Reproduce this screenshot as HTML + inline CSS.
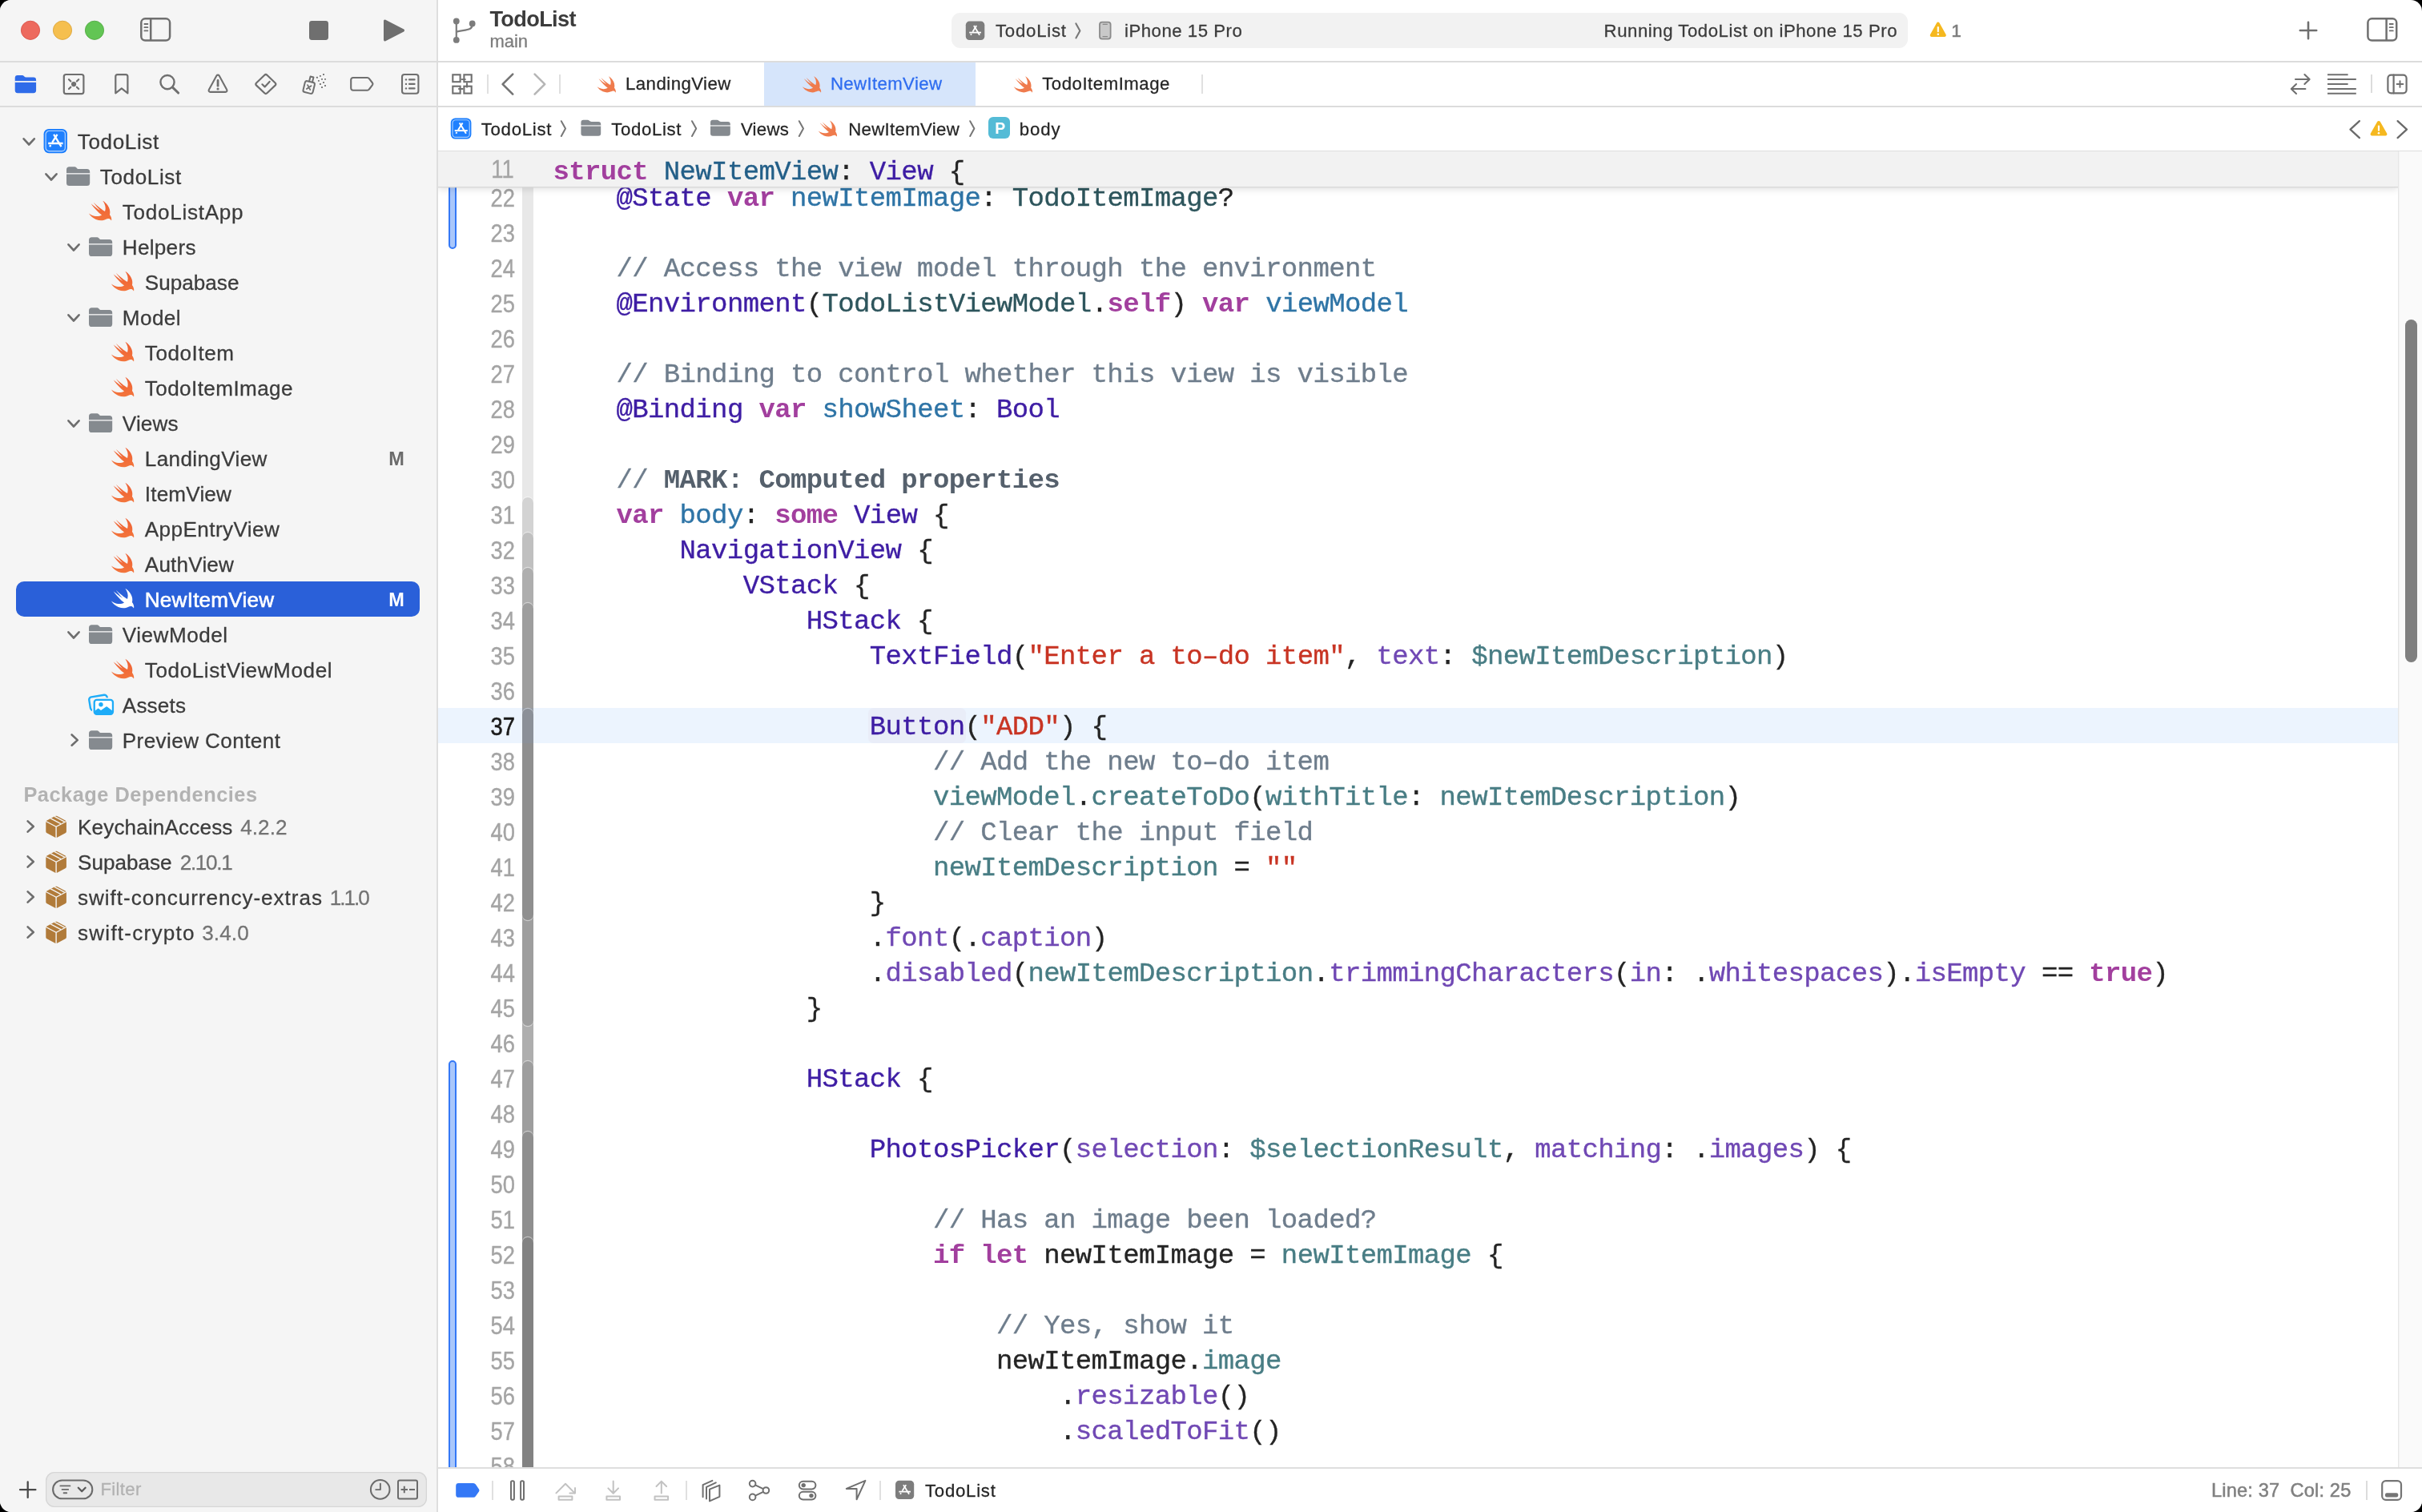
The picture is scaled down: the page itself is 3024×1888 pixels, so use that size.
<!DOCTYPE html>
<html><head><meta charset="utf-8"><title>Xcode</title>
<style>
html,body{margin:0;padding:0;background:#000;}
body{width:3024px;height:1888px;overflow:hidden;position:relative;}
#win{will-change:transform;position:absolute;left:0;top:0;width:3024px;height:1888px;background:#fff;border-radius:14px;overflow:hidden;}
.b{position:absolute;display:block;}
.t{position:absolute;white-space:pre;}
.fs{font-family:"Liberation Sans", sans-serif;-webkit-text-stroke:0.28px;}
.fm{font-family:"Liberation Mono", monospace;}
.cl{position:absolute;left:0;white-space:pre;font-family:"Liberation Mono", monospace;font-size:34px;line-height:44px;height:44px;letter-spacing:-0.633px;color:#242424;-webkit-text-stroke:0.35px;}
.k{color:#a23f9e;font-weight:bold;-webkit-text-stroke:0;}
.dt{color:#235f88;}
.dv{color:#2e74a6;}
.pc{color:#2d555c;}
.pf{color:#487d84;}
.oc{color:#3e1da4;}
.of{color:#7048b4;}
.s{color:#c83423;}
.c{color:#6e7d8c;}
.mk{color:#55606c;font-weight:bold;-webkit-text-stroke:0;}
</style></head><body><div id="win">
<div class="b" style="left:0.00px;top:0.00px;width:545.00px;height:1888.00px;background:#f5f5f5;"></div>
<div class="b" style="left:545.00px;top:0.00px;width:1.50px;height:1888.00px;background:#dedede;"></div>
<div class="b" style="left:0.00px;top:76.00px;width:3024.00px;height:1.60px;background:#dcdcdc;"></div>
<div class="b" style="left:0.00px;top:132.20px;width:3024.00px;height:1.60px;background:#dcdcdc;"></div>
<div class="b" style="left:546.50px;top:188.00px;width:2477.50px;height:1.40px;background:#dedede;"></div>
<div class="t fs" style="left:611.40px;top:9.58px;font-size:27.2px;line-height:27.2px;color:#3c3c3c;font-weight:bold;-webkit-text-stroke:0;letter-spacing:-0.659px;">TodoList</div>
<div class="t fs" style="left:611.60px;top:41.38px;font-size:22px;line-height:22px;color:#7c7c7c;letter-spacing:-0.095px;">main</div>
<div class="b" style="left:1187.70px;top:16.00px;width:1194.30px;height:43.60px;background:#f2f2f2;border-radius:11px;"></div>
<div class="t fs" style="left:1243.00px;top:27.61px;font-size:22.2px;line-height:22.2px;color:#3c3c3c;letter-spacing:0.758px;">TodoList</div>
<div class="t fs" style="left:1404.00px;top:27.61px;font-size:22.2px;line-height:22.2px;color:#3c3c3c;letter-spacing:0.517px;">iPhone 15 Pro</div>
<div class="t fs" style="left:2002.60px;top:27.61px;font-size:22.2px;line-height:22.2px;color:#3c3c3c;letter-spacing:0.538px;">Running TodoList on iPhone 15 Pro</div>
<div class="t fs" style="left:2436.60px;top:27.98px;font-size:22px;line-height:22px;color:#7e7e7e;-webkit-text-stroke:0.7px;">1</div>
<div class="b" style="left:608.10px;top:93.20px;width:1.50px;height:23.40px;background:#e0e0e0;"></div>
<div class="b" style="left:698.30px;top:93.20px;width:1.50px;height:23.40px;background:#e0e0e0;"></div>
<div class="t fs" style="left:781.00px;top:94.41px;font-size:22.2px;line-height:22.2px;color:#262626;letter-spacing:0.468px;">LandingView</div>
<div class="b" style="left:953.90px;top:77.60px;width:263.80px;height:54.60px;background:#d6e5fb;"></div>
<div class="t fs" style="left:1036.90px;top:94.41px;font-size:22.2px;line-height:22.2px;color:#2f6df0;letter-spacing:0.384px;">NewItemView</div>
<div class="t fs" style="left:1301.20px;top:94.41px;font-size:22.2px;line-height:22.2px;color:#262626;letter-spacing:0.524px;">TodoItemImage</div>
<div class="b" style="left:1500.30px;top:93.20px;width:1.50px;height:23.40px;background:#e0e0e0;"></div>
<div class="b" style="left:2960.40px;top:93.40px;width:1.40px;height:23.00px;background:#dcdcdc;"></div>
<div class="t fs" style="left:600.70px;top:150.61px;font-size:22.2px;line-height:22.2px;color:#262626;letter-spacing:0.729px;">TodoList</div>
<div class="t fs" style="left:763.20px;top:150.61px;font-size:22.2px;line-height:22.2px;color:#262626;letter-spacing:0.672px;">TodoList</div>
<div class="t fs" style="left:924.90px;top:150.61px;font-size:22.2px;line-height:22.2px;color:#262626;letter-spacing:0.293px;">Views</div>
<div class="t fs" style="left:1059.20px;top:150.61px;font-size:22.2px;line-height:22.2px;color:#262626;letter-spacing:0.334px;">NewItemView</div>
<div class="b" style="left:1234.30px;top:146.20px;width:27.20px;height:27.20px;background:#54bbd6;border-radius:6px;"></div>
<div class="t fs" style="left:1242.20px;top:151.49px;font-size:19.5px;line-height:19.5px;color:#fff;font-weight:bold;-webkit-text-stroke:0;">P</div>
<div class="t fs" style="left:1272.70px;top:150.61px;font-size:22.2px;line-height:22.2px;color:#262626;letter-spacing:0.894px;">body</div>
<div class="t fs" style="left:96.80px;top:164.41px;font-size:26.1px;line-height:26.1px;color:#3c3c3c;letter-spacing:0.601px;">TodoList</div>
<div class="t fs" style="left:124.80px;top:208.41px;font-size:26.1px;line-height:26.1px;color:#3c3c3c;letter-spacing:0.601px;">TodoList</div>
<div class="t fs" style="left:152.80px;top:252.41px;font-size:26.1px;line-height:26.1px;color:#3c3c3c;letter-spacing:0.715px;">TodoListApp</div>
<div class="t fs" style="left:152.80px;top:296.41px;font-size:26.1px;line-height:26.1px;color:#3c3c3c;letter-spacing:0.286px;">Helpers</div>
<div class="t fs" style="left:180.80px;top:340.41px;font-size:26.1px;line-height:26.1px;color:#3c3c3c;letter-spacing:0.01px;">Supabase</div>
<div class="t fs" style="left:152.80px;top:384.41px;font-size:26.1px;line-height:26.1px;color:#3c3c3c;letter-spacing:0.43px;">Model</div>
<div class="t fs" style="left:180.80px;top:428.41px;font-size:26.1px;line-height:26.1px;color:#3c3c3c;letter-spacing:0.557px;">TodoItem</div>
<div class="t fs" style="left:180.80px;top:472.41px;font-size:26.1px;line-height:26.1px;color:#3c3c3c;letter-spacing:0.406px;">TodoItemImage</div>
<div class="t fs" style="left:152.80px;top:516.41px;font-size:26.1px;line-height:26.1px;color:#3c3c3c;letter-spacing:0.148px;">Views</div>
<div class="t fs" style="left:180.80px;top:560.41px;font-size:26.1px;line-height:26.1px;color:#3c3c3c;letter-spacing:0.362px;">LandingView</div>
<div class="t fs" style="left:485.20px;top:562.21px;font-size:23.5px;line-height:23.5px;color:#6b6b6b;font-weight:bold;-webkit-text-stroke:0;">M</div>
<div class="t fs" style="left:180.80px;top:604.41px;font-size:26.1px;line-height:26.1px;color:#3c3c3c;letter-spacing:0.182px;">ItemView</div>
<div class="t fs" style="left:180.80px;top:648.41px;font-size:26.1px;line-height:26.1px;color:#3c3c3c;letter-spacing:0.423px;">AppEntryView</div>
<div class="t fs" style="left:180.80px;top:692.41px;font-size:26.1px;line-height:26.1px;color:#3c3c3c;letter-spacing:0.194px;">AuthView</div>
<div class="b" style="left:20.00px;top:725.90px;width:504.00px;height:44.00px;background:#2a60d9;border-radius:10px;"></div>
<div class="t fs" style="left:180.80px;top:736.41px;font-size:26.1px;line-height:26.1px;color:#fff;letter-spacing:0.224px;-webkit-text-stroke:0.6px;">NewItemView</div>
<div class="t fs" style="left:485.20px;top:738.21px;font-size:23.5px;line-height:23.5px;color:#fff;font-weight:bold;-webkit-text-stroke:0;">M</div>
<div class="t fs" style="left:152.80px;top:780.41px;font-size:26.1px;line-height:26.1px;color:#3c3c3c;letter-spacing:0.506px;">ViewModel</div>
<div class="t fs" style="left:180.80px;top:824.41px;font-size:26.1px;line-height:26.1px;color:#3c3c3c;letter-spacing:0.587px;">TodoListViewModel</div>
<div class="t fs" style="left:152.80px;top:868.41px;font-size:26.1px;line-height:26.1px;color:#3c3c3c;letter-spacing:0.177px;">Assets</div>
<div class="t fs" style="left:152.80px;top:912.41px;font-size:26.1px;line-height:26.1px;color:#3c3c3c;letter-spacing:0.407px;">Preview Content</div>
<div class="t fs" style="left:29.40px;top:979.60px;font-size:25.4px;line-height:25.4px;color:#b2b2b2;font-weight:bold;-webkit-text-stroke:0;letter-spacing:0.496px;">Package Dependencies</div>
<div class="t fs" style="left:97.00px;top:1020.31px;font-size:26.1px;line-height:26.1px;color:#3c3c3c;letter-spacing:0.148px;">KeychainAccess</div>
<div class="t fs" style="left:300.13px;top:1020.31px;font-size:26.1px;line-height:26.1px;color:#737373;letter-spacing:0.093px;">4.2.2</div>
<div class="t fs" style="left:97.00px;top:1064.31px;font-size:26.1px;line-height:26.1px;color:#3c3c3c;letter-spacing:0.01px;">Supabase</div>
<div class="t fs" style="left:224.71px;top:1064.31px;font-size:26.1px;line-height:26.1px;color:#737373;letter-spacing:-1.314px;">2.10.1</div>
<div class="t fs" style="left:97.00px;top:1108.31px;font-size:26.1px;line-height:26.1px;color:#3c3c3c;letter-spacing:0.968px;">swift-concurrency-extras</div>
<div class="t fs" style="left:411.74px;top:1108.31px;font-size:26.1px;line-height:26.1px;color:#737373;letter-spacing:-1.98px;">1.1.0</div>
<div class="t fs" style="left:97.00px;top:1152.31px;font-size:26.1px;line-height:26.1px;color:#3c3c3c;letter-spacing:1.232px;">swift-crypto</div>
<div class="t fs" style="left:252.24px;top:1152.31px;font-size:26.1px;line-height:26.1px;color:#737373;letter-spacing:0.093px;">3.4.0</div>
<div class="b" style="left:56.50px;top:1838.20px;width:476.80px;height:43.40px;background:#e8e8e8;border-radius:11px;box-shadow:inset 0 0 0 1.3px #d6d6d6;"></div>
<div class="t fs" style="left:125.40px;top:1848.51px;font-size:22.2px;line-height:22.2px;color:#b2b2b2;letter-spacing:0.332px;">Filter</div>
<div class="b" style="left:0;top:189.4px;width:3024px;height:1643.0px;overflow:hidden;">
<div class="b" style="left:546.50px;top:694.80px;width:2447.90px;height:43.70px;background:#ecf4fe;"></div>
<div class="b" style="left:1083.80px;top:694.80px;width:122.20px;height:43.70px;background:#e9edf8;border-radius:6.5px;"></div>
<div class="b" style="left:652.00px;top:-8.00px;width:14.00px;height:1661.00px;background:#e8e8e8;"></div>
<div class="b" style="left:652.00px;top:432.00px;width:14.00px;height:1221.00px;background:#d3d3d3;border-top-left-radius:7px;border-top-right-radius:7px;box-shadow:0 -1.3px 0 rgba(255,255,255,0.45);"></div>
<div class="b" style="left:652.00px;top:476.00px;width:14.00px;height:1177.00px;background:#c0c0c0;border-top-left-radius:7px;border-top-right-radius:7px;box-shadow:0 -1.3px 0 rgba(255,255,255,0.45);"></div>
<div class="b" style="left:652.00px;top:520.00px;width:14.00px;height:1133.00px;background:#aeaeae;border-top-left-radius:7px;border-top-right-radius:7px;box-shadow:0 -1.3px 0 rgba(255,255,255,0.45);"></div>
<div class="b" style="left:652.00px;top:564.00px;width:14.00px;height:528.00px;background:#9e9e9e;border-top-left-radius:7px;border-top-right-radius:7px;border-bottom-left-radius:7px;border-bottom-right-radius:7px;box-shadow:0 -1.3px 0 rgba(255,255,255,0.45),0 1.3px 0 rgba(255,255,255,0.45);"></div>
<div class="b" style="left:652.00px;top:696.00px;width:14.00px;height:264.00px;background:#8f8f8f;border-top-left-radius:7px;border-top-right-radius:7px;border-bottom-left-radius:7px;border-bottom-right-radius:7px;box-shadow:0 -1.3px 0 rgba(255,255,255,0.45),0 1.3px 0 rgba(255,255,255,0.45);"></div>
<div class="b" style="left:652.00px;top:1136.00px;width:14.00px;height:517.00px;background:#9e9e9e;border-top-left-radius:7px;border-top-right-radius:7px;box-shadow:0 -1.3px 0 rgba(255,255,255,0.45);"></div>
<div class="b" style="left:652.00px;top:1224.00px;width:14.00px;height:429.00px;background:#8f8f8f;border-top-left-radius:7px;border-top-right-radius:7px;box-shadow:0 -1.3px 0 rgba(255,255,255,0.45);"></div>
<div class="b" style="left:652.00px;top:1356.00px;width:14.00px;height:297.00px;background:#828282;border-top-left-radius:7px;border-top-right-radius:7px;box-shadow:0 -1.3px 0 rgba(255,255,255,0.45);"></div>
<div class="b" style="left:652.00px;top:694.80px;width:14.00px;height:43.70px;background:rgba(120,150,200,0.16);"></div>
<div class="b" style="left:560.20px;top:-39.40px;width:9.60px;height:161.40px;background:#a9c7fb;box-sizing:border-box;border:2.1px solid #3478f6;border-bottom-left-radius:5px;border-bottom-right-radius:5px;"></div>
<div class="b" style="left:560.20px;top:1134.80px;width:9.60px;height:575.80px;background:#a9c7fb;box-sizing:border-box;border:2.1px solid #3478f6;border-top-left-radius:5px;border-top-right-radius:5px;"></div>
<div class="t fs" style="right:2381.40px;top:42.62px;font-size:31.4px;line-height:31.4px;color:#a4a4a4;transform:scaleX(0.87);transform-origin:right center;-webkit-text-stroke:0.38px;">22</div>
<div class="cl" style="left:690.4px;top:36.83px;">    <span class="oc">@State</span> <span class="k">var</span> <span class="dv">newItemImage</span>: <span class="pc">TodoItemImage</span>?</div>
<div class="t fs" style="right:2381.40px;top:86.62px;font-size:31.4px;line-height:31.4px;color:#a4a4a4;transform:scaleX(0.87);transform-origin:right center;-webkit-text-stroke:0.38px;">23</div>
<div class="t fs" style="right:2381.40px;top:130.62px;font-size:31.4px;line-height:31.4px;color:#a4a4a4;transform:scaleX(0.87);transform-origin:right center;-webkit-text-stroke:0.38px;">24</div>
<div class="cl" style="left:690.4px;top:124.83px;">    <span class="c">// Access the view model through the environment</span></div>
<div class="t fs" style="right:2381.40px;top:174.62px;font-size:31.4px;line-height:31.4px;color:#a4a4a4;transform:scaleX(0.87);transform-origin:right center;-webkit-text-stroke:0.38px;">25</div>
<div class="cl" style="left:690.4px;top:168.83px;">    <span class="oc">@Environment</span>(<span class="pc">TodoListViewModel</span>.<span class="k">self</span>) <span class="k">var</span> <span class="dv">viewModel</span></div>
<div class="t fs" style="right:2381.40px;top:218.62px;font-size:31.4px;line-height:31.4px;color:#a4a4a4;transform:scaleX(0.87);transform-origin:right center;-webkit-text-stroke:0.38px;">26</div>
<div class="t fs" style="right:2381.40px;top:262.62px;font-size:31.4px;line-height:31.4px;color:#a4a4a4;transform:scaleX(0.87);transform-origin:right center;-webkit-text-stroke:0.38px;">27</div>
<div class="cl" style="left:690.4px;top:256.83px;">    <span class="c">// Binding to control whether this view is visible</span></div>
<div class="t fs" style="right:2381.40px;top:306.62px;font-size:31.4px;line-height:31.4px;color:#a4a4a4;transform:scaleX(0.87);transform-origin:right center;-webkit-text-stroke:0.38px;">28</div>
<div class="cl" style="left:690.4px;top:300.83px;">    <span class="oc">@Binding</span> <span class="k">var</span> <span class="dv">showSheet</span>: <span class="oc">Bool</span></div>
<div class="t fs" style="right:2381.40px;top:350.62px;font-size:31.4px;line-height:31.4px;color:#a4a4a4;transform:scaleX(0.87);transform-origin:right center;-webkit-text-stroke:0.38px;">29</div>
<div class="t fs" style="right:2381.40px;top:394.62px;font-size:31.4px;line-height:31.4px;color:#a4a4a4;transform:scaleX(0.87);transform-origin:right center;-webkit-text-stroke:0.38px;">30</div>
<div class="cl" style="left:690.4px;top:388.83px;">    <span class="c">// </span><span class="mk">MARK: Computed properties</span></div>
<div class="t fs" style="right:2381.40px;top:438.62px;font-size:31.4px;line-height:31.4px;color:#a4a4a4;transform:scaleX(0.87);transform-origin:right center;-webkit-text-stroke:0.38px;">31</div>
<div class="cl" style="left:690.4px;top:432.83px;">    <span class="k">var</span> <span class="dv">body</span>: <span class="k">some</span> <span class="oc">View</span> {</div>
<div class="t fs" style="right:2381.40px;top:482.62px;font-size:31.4px;line-height:31.4px;color:#a4a4a4;transform:scaleX(0.87);transform-origin:right center;-webkit-text-stroke:0.38px;">32</div>
<div class="cl" style="left:690.4px;top:476.83px;">        <span class="oc">NavigationView</span> {</div>
<div class="t fs" style="right:2381.40px;top:526.62px;font-size:31.4px;line-height:31.4px;color:#a4a4a4;transform:scaleX(0.87);transform-origin:right center;-webkit-text-stroke:0.38px;">33</div>
<div class="cl" style="left:690.4px;top:520.83px;">            <span class="oc">VStack</span> {</div>
<div class="t fs" style="right:2381.40px;top:570.62px;font-size:31.4px;line-height:31.4px;color:#a4a4a4;transform:scaleX(0.87);transform-origin:right center;-webkit-text-stroke:0.38px;">34</div>
<div class="cl" style="left:690.4px;top:564.83px;">                <span class="oc">HStack</span> {</div>
<div class="t fs" style="right:2381.40px;top:614.62px;font-size:31.4px;line-height:31.4px;color:#a4a4a4;transform:scaleX(0.87);transform-origin:right center;-webkit-text-stroke:0.38px;">35</div>
<div class="cl" style="left:690.4px;top:608.83px;">                    <span class="oc">TextField</span>(<span class="s">"Enter a to–do item"</span>, <span class="of">text</span>: <span class="pf">$newItemDescription</span>)</div>
<div class="t fs" style="right:2381.40px;top:658.62px;font-size:31.4px;line-height:31.4px;color:#a4a4a4;transform:scaleX(0.87);transform-origin:right center;-webkit-text-stroke:0.38px;">36</div>
<div class="t fs" style="right:2381.40px;top:702.62px;font-size:31.4px;line-height:31.4px;color:#1a1a1a;transform:scaleX(0.87);transform-origin:right center;-webkit-text-stroke:0.6px;">37</div>
<div class="cl" style="left:690.4px;top:696.83px;">                    <span class="oc">Button</span>(<span class="s">"ADD"</span>) {</div>
<div class="t fs" style="right:2381.40px;top:746.62px;font-size:31.4px;line-height:31.4px;color:#a4a4a4;transform:scaleX(0.87);transform-origin:right center;-webkit-text-stroke:0.38px;">38</div>
<div class="cl" style="left:690.4px;top:740.83px;">                        <span class="c">// Add the new to–do item</span></div>
<div class="t fs" style="right:2381.40px;top:790.62px;font-size:31.4px;line-height:31.4px;color:#a4a4a4;transform:scaleX(0.87);transform-origin:right center;-webkit-text-stroke:0.38px;">39</div>
<div class="cl" style="left:690.4px;top:784.83px;">                        <span class="pf">viewModel</span>.<span class="pf">createToDo</span>(<span class="pf">withTitle</span>: <span class="pf">newItemDescription</span>)</div>
<div class="t fs" style="right:2381.40px;top:834.62px;font-size:31.4px;line-height:31.4px;color:#a4a4a4;transform:scaleX(0.87);transform-origin:right center;-webkit-text-stroke:0.38px;">40</div>
<div class="cl" style="left:690.4px;top:828.83px;">                        <span class="c">// Clear the input field</span></div>
<div class="t fs" style="right:2381.40px;top:878.62px;font-size:31.4px;line-height:31.4px;color:#a4a4a4;transform:scaleX(0.87);transform-origin:right center;-webkit-text-stroke:0.38px;">41</div>
<div class="cl" style="left:690.4px;top:872.83px;">                        <span class="pf">newItemDescription</span> = <span class="s">""</span></div>
<div class="t fs" style="right:2381.40px;top:922.62px;font-size:31.4px;line-height:31.4px;color:#a4a4a4;transform:scaleX(0.87);transform-origin:right center;-webkit-text-stroke:0.38px;">42</div>
<div class="cl" style="left:690.4px;top:916.83px;">                    }</div>
<div class="t fs" style="right:2381.40px;top:966.62px;font-size:31.4px;line-height:31.4px;color:#a4a4a4;transform:scaleX(0.87);transform-origin:right center;-webkit-text-stroke:0.38px;">43</div>
<div class="cl" style="left:690.4px;top:960.83px;">                    .<span class="of">font</span>(.<span class="of">caption</span>)</div>
<div class="t fs" style="right:2381.40px;top:1010.62px;font-size:31.4px;line-height:31.4px;color:#a4a4a4;transform:scaleX(0.87);transform-origin:right center;-webkit-text-stroke:0.38px;">44</div>
<div class="cl" style="left:690.4px;top:1004.83px;">                    .<span class="of">disabled</span>(<span class="pf">newItemDescription</span>.<span class="of">trimmingCharacters</span>(<span class="of">in</span>: .<span class="of">whitespaces</span>).<span class="of">isEmpty</span> == <span class="k">true</span>)</div>
<div class="t fs" style="right:2381.40px;top:1054.62px;font-size:31.4px;line-height:31.4px;color:#a4a4a4;transform:scaleX(0.87);transform-origin:right center;-webkit-text-stroke:0.38px;">45</div>
<div class="cl" style="left:690.4px;top:1048.83px;">                }</div>
<div class="t fs" style="right:2381.40px;top:1098.62px;font-size:31.4px;line-height:31.4px;color:#a4a4a4;transform:scaleX(0.87);transform-origin:right center;-webkit-text-stroke:0.38px;">46</div>
<div class="t fs" style="right:2381.40px;top:1142.62px;font-size:31.4px;line-height:31.4px;color:#a4a4a4;transform:scaleX(0.87);transform-origin:right center;-webkit-text-stroke:0.38px;">47</div>
<div class="cl" style="left:690.4px;top:1136.83px;">                <span class="oc">HStack</span> {</div>
<div class="t fs" style="right:2381.40px;top:1186.62px;font-size:31.4px;line-height:31.4px;color:#a4a4a4;transform:scaleX(0.87);transform-origin:right center;-webkit-text-stroke:0.38px;">48</div>
<div class="t fs" style="right:2381.40px;top:1230.62px;font-size:31.4px;line-height:31.4px;color:#a4a4a4;transform:scaleX(0.87);transform-origin:right center;-webkit-text-stroke:0.38px;">49</div>
<div class="cl" style="left:690.4px;top:1224.83px;">                    <span class="oc">PhotosPicker</span>(<span class="of">selection</span>: <span class="pf">$selectionResult</span>, <span class="of">matching</span>: .<span class="of">images</span>) {</div>
<div class="t fs" style="right:2381.40px;top:1274.62px;font-size:31.4px;line-height:31.4px;color:#a4a4a4;transform:scaleX(0.87);transform-origin:right center;-webkit-text-stroke:0.38px;">50</div>
<div class="t fs" style="right:2381.40px;top:1318.62px;font-size:31.4px;line-height:31.4px;color:#a4a4a4;transform:scaleX(0.87);transform-origin:right center;-webkit-text-stroke:0.38px;">51</div>
<div class="cl" style="left:690.4px;top:1312.83px;">                        <span class="c">// Has an image been loaded?</span></div>
<div class="t fs" style="right:2381.40px;top:1362.62px;font-size:31.4px;line-height:31.4px;color:#a4a4a4;transform:scaleX(0.87);transform-origin:right center;-webkit-text-stroke:0.38px;">52</div>
<div class="cl" style="left:690.4px;top:1356.83px;">                        <span class="k">if</span> <span class="k">let</span> newItemImage = <span class="pf">newItemImage</span> {</div>
<div class="t fs" style="right:2381.40px;top:1406.62px;font-size:31.4px;line-height:31.4px;color:#a4a4a4;transform:scaleX(0.87);transform-origin:right center;-webkit-text-stroke:0.38px;">53</div>
<div class="t fs" style="right:2381.40px;top:1450.62px;font-size:31.4px;line-height:31.4px;color:#a4a4a4;transform:scaleX(0.87);transform-origin:right center;-webkit-text-stroke:0.38px;">54</div>
<div class="cl" style="left:690.4px;top:1444.83px;">                            <span class="c">// Yes, show it</span></div>
<div class="t fs" style="right:2381.40px;top:1494.62px;font-size:31.4px;line-height:31.4px;color:#a4a4a4;transform:scaleX(0.87);transform-origin:right center;-webkit-text-stroke:0.38px;">55</div>
<div class="cl" style="left:690.4px;top:1488.83px;">                            newItemImage.<span class="pf">image</span></div>
<div class="t fs" style="right:2381.40px;top:1538.62px;font-size:31.4px;line-height:31.4px;color:#a4a4a4;transform:scaleX(0.87);transform-origin:right center;-webkit-text-stroke:0.38px;">56</div>
<div class="cl" style="left:690.4px;top:1532.83px;">                                .<span class="of">resizable</span>()</div>
<div class="t fs" style="right:2381.40px;top:1582.62px;font-size:31.4px;line-height:31.4px;color:#a4a4a4;transform:scaleX(0.87);transform-origin:right center;-webkit-text-stroke:0.38px;">57</div>
<div class="cl" style="left:690.4px;top:1576.83px;">                                .<span class="of">scaledToFit</span>()</div>
<div class="t fs" style="right:2381.40px;top:1626.62px;font-size:31.4px;line-height:31.4px;color:#a4a4a4;transform:scaleX(0.87);transform-origin:right center;-webkit-text-stroke:0.38px;">58</div>
</div>
<div class="b" style="left:2994.40px;top:189.40px;width:29.60px;height:1643.00px;background:#fafafa;box-shadow:inset 1.4px 0 0 #e7e7e7;"></div>
<div class="b" style="left:3002.60px;top:399.20px;width:15.00px;height:428.00px;background:#7f7f7f;border-radius:7.5px;"></div>
<div class="b" style="left:546.5px;top:189.4px;width:2447.9px;height:70px;overflow:hidden;">
<div class="b" style="left:0.00px;top:0.00px;width:2447.90px;height:43.40px;background:#f2f2f2;box-shadow:0 1.4px 0 #d9d9d9, 0 3px 9px rgba(0,0,0,0.13);"></div>
</div>
<div class="t fs" style="right:2382.80px;top:195.62px;font-size:31.4px;line-height:31.4px;color:#a4a4a4;transform:scaleX(0.87);transform-origin:right center;-webkit-text-stroke:0.38px;">11</div>
<div class="cl" style="left:690.4px;top:193.13px;"><span class="k">struct</span> <span class="dt">NewItemView</span>: <span class="oc">View</span> {</div>
<div class="b" style="left:546.50px;top:1832.40px;width:2477.50px;height:1.50px;background:#dedede;"></div>
<div class="b" style="left:546.50px;top:1833.90px;width:2477.50px;height:54.10px;background:#fff;"></div>
<div class="b" style="left:614.20px;top:1849.20px;width:1.50px;height:23.60px;background:#e0e0e0;"></div>
<div class="b" style="left:856.20px;top:1849.20px;width:1.50px;height:23.60px;background:#e0e0e0;"></div>
<div class="b" style="left:1098.20px;top:1849.20px;width:1.50px;height:23.60px;background:#e0e0e0;"></div>
<div class="t fs" style="left:1155.00px;top:1851.01px;font-size:22.2px;line-height:22.2px;color:#262626;letter-spacing:0.744px;">TodoList</div>
<div class="t fs" style="left:2761.00px;top:1849.82px;font-size:23.6px;line-height:23.6px;color:#808080;letter-spacing:0.152px;-webkit-text-stroke:0.5px;">Line: 37  Col: 25</div>
<div class="b" style="left:2954.20px;top:1849.40px;width:1.40px;height:23.40px;background:#dcdcdc;"></div>
<svg class="b" style="left:0;top:0;" width="3024" height="1888" viewBox="0 0 3024 1888"><defs><linearGradient id="sw" x1="0" y1="0" x2="0" y2="1"><stop offset="0" stop-color="#ee5f33"/><stop offset="1" stop-color="#f3753c"/></linearGradient></defs><circle cx="38" cy="37.8" r="11.6" fill="#ed6a5e" stroke="#d9534a" stroke-width="0.9"/><circle cx="78" cy="37.8" r="11.6" fill="#f5bf4f" stroke="#dba53c" stroke-width="0.9"/><circle cx="118" cy="37.8" r="11.6" fill="#62c554" stroke="#52a943" stroke-width="0.9"/><g fill="none" stroke="#6f6f6f" stroke-width="2.5"><rect x="176.3" y="23.3" width="35.8" height="27.2" rx="5"/><path d="M188.2 23.3V50.5"/></g><g stroke="#6f6f6f" stroke-width="1.8" stroke-linecap="round"><path d="M180.4 30H184.4M180.4 34.2H184.4M180.4 38.4H184.4"/></g><rect x="386" y="26" width="24" height="24" rx="3.4" fill="#6f6f6f"/><path d="M479 26.2V49.800a1.600 1.600 0 0 0 2.400 1.400L504.200 39.400a1.600 1.600 0 0 0 0-2.800L481.400 24.800a1.600 1.600 0 0 0-2.400 1.400Z" fill="#6f6f6f"/><g fill="none" stroke="#7c7c7c" stroke-width="2.2" stroke-linecap="round"><path d="M569.8 27.5V49"/><path d="M589.7 31C589.7 37.5 583 36.8 570 39.6"/></g><circle cx="569.8" cy="26.5" r="3.9" fill="#7c7c7c"/><circle cx="569.8" cy="49.9" r="3.9" fill="#7c7c7c"/><circle cx="589.7" cy="29.4" r="3.9" fill="#7c7c7c"/><g transform="translate(1205.80,26.60) scale(1.0000,1.0000)"><rect x="0" y="0" width="23.5" height="23.5" rx="4.6" fill="#7d7d7d"/><g stroke="#fff" stroke-width="1.8" stroke-linecap="butt" fill="none"><path d="M8.6 13.2L13.4 5.4"/><path d="M10.1 5.400L17.300 17.200"/><path d="M4.400 14H19.200"/><path d="M6.200 17.200L7.100 15.600"/></g></g><path d="M1343.4 29.4L1348.4 38.4L1343.4 47.4" fill="none" stroke="#787878" stroke-width="2.1" stroke-linecap="round" stroke-linejoin="round"/><rect x="1373" y="27.6" width="13.6" height="21" rx="3" fill="#c9c9c9" stroke="#8a8a8a" stroke-width="1.8"/><path d="M1377.2 30.3H1382.4" stroke="#8a8a8a" stroke-width="1.3" stroke-linecap="round"/><path d="M1377 45.7H1382.6" stroke="#8a8a8a" stroke-width="1.2" stroke-linecap="round"/><g transform="translate(2409.60,27.10) scale(1.0000,1.0000)"><path d="M8.55 1.35a1.95 1.95 0 0 1 3.3 0l8.1 14.5a2 2 0 0 1-1.7 3.05H2.15a2 2 0 0 1-1.7-3.05Z" fill="#f5b81f"/><rect x="9.15" y="6" width="2.1" height="7.2" rx="1.05" fill="#fff"/><circle cx="10.2" cy="15.7" r="1.25" fill="#fff"/></g><path d="M2871.8 38H2892.2M2882 27.8V48.2" stroke="#6f6f6f" stroke-width="2.6" stroke-linecap="round"/><g fill="none" stroke="#6f6f6f" stroke-width="2.5"><rect x="2956.4" y="23.3" width="35.8" height="27.2" rx="5"/><path d="M2979.6 23.3V50.5"/></g><g stroke="#6f6f6f" stroke-width="1.8" stroke-linecap="round"><path d="M2983.6 30H2987.8M2983.6 34.2H2987.8M2983.6 38.4H2987.8"/></g><g transform="translate(18.70,94.00) scale(0.9041,0.9328)"><path d="M0 3.6A3.6 3.6 0 0 1 3.6 0H9.6c1.2 0 1.9.35 2.7 1.05l.9.8c.75.65 1.4.85 2.5.85H25.6a3.6 3.6 0 0 1 3.6 3.6V20.2a3.6 3.6 0 0 1-3.6 3.6H3.6A3.6 3.6 0 0 1 0 20.2Z" fill="#2f6be9"/><rect x="-0.5" y="7.60" width="30.2" height="1.9" fill="#f5f5f5"/></g><g fill="none" stroke="#6f6f6f" stroke-width="2.2" stroke-linecap="round"><rect x="79.8" y="93" width="24.6" height="24.2" rx="2.6"/><path d="M86 99.2L88.3 101.5M98.2 99.2L95.9 101.5M86 111L88.3 108.7M98.2 111L95.9 108.7"/></g><circle cx="92.1" cy="105.1" r="3.1" fill="#6f6f6f"/><path d="M144.3 95.6a2.4 2.4 0 0 1 2.4-2.4H157a2.4 2.4 0 0 1 2.4 2.4V116.4L151.85 110.4L144.3 116.4Z" fill="none" stroke="#6f6f6f" stroke-width="2.2" stroke-linejoin="round"/><g fill="none" stroke="#6f6f6f" stroke-width="2.4" stroke-linecap="round"><circle cx="209" cy="102.6" r="8.6"/><path d="M215.8 109.4L222.6 116" stroke-width="3.1"/></g><path d="M270.4 94.6a1.9 1.9 0 0 1 3.3 0L283.2 112a1.9 1.9 0 0 1-1.65 2.85H262.5a1.9 1.9 0 0 1-1.65-2.85Z" fill="none" stroke="#6f6f6f" stroke-width="2.1" stroke-linejoin="round"/><path d="M272.05 100.4V107.2" stroke="#6f6f6f" stroke-width="2.8" stroke-linecap="round"/><circle cx="272.05" cy="111" r="1.6" fill="#6f6f6f"/><g fill="none" stroke="#6f6f6f" stroke-width="2.2" stroke-linejoin="round" stroke-linecap="round"><path d="M330.3 93.8a2.2 2.2 0 0 1 3.1 0L343.6 103.5a2.2 2.2 0 0 1 0 3.1L333.4 116.3a2.2 2.2 0 0 1-3.1 0L320.1 106.6a2.2 2.2 0 0 1 0-3.1Z"/><path d="M327.4 105.3L330.6 108.4L336.6 101.9"/></g><g transform="rotate(13.7 385.7 109.05)" fill="none" stroke="#6f6f6f" stroke-width="2" stroke-linejoin="round" stroke-linecap="round"><rect x="379.5" y="101.95" width="12.4" height="14.2" rx="2.4"/><path d="M384.3 101.6V95.4H388.3V101.600"/><path d="M383.4 106.6L388 111.6M388 106.600L383.4 111.6" stroke-width="1.8"/></g><g fill="#6f6f6f"><rect x="394.95" y="95.75" width="1.9" height="1.9" rx="0.5"/><rect x="398.95" y="93.95" width="1.9" height="1.9" rx="0.5"/><rect x="403.05" y="92.05" width="1.9" height="1.9" rx="0.5"/><rect x="396.95" y="99.95" width="1.9" height="1.9" rx="0.5"/><rect x="401.05" y="97.95" width="1.9" height="1.9" rx="0.5"/><rect x="405.05" y="97.95" width="1.9" height="1.9" rx="0.5"/><rect x="403.05" y="102.05" width="1.9" height="1.9" rx="0.5"/><rect x="398.95" y="104.05" width="1.9" height="1.9" rx="0.5"/><rect x="405.05" y="106.05" width="1.9" height="1.9" rx="0.5"/><rect x="401.05" y="108.05" width="1.9" height="1.9" rx="0.5"/></g><path d="M440.8 97H458.6a2.8 2.8 0 0 1 2.3 1.200L465 103.500a2.200 2.200 0 0 1 0 2.700L460.900 111.500a2.800 2.800 0 0 1-2.300 1.200H440.800a2.600 2.600 0 0 1-2.600-2.600V99.600a2.600 2.600 0 0 1 2.600-2.600Z" fill="none" stroke="#6f6f6f" stroke-width="2.1" stroke-linejoin="round"/><g fill="none" stroke="#6f6f6f" stroke-width="2.1" stroke-linecap="round"><rect x="502" y="93" width="20.4" height="23.8" rx="3"/><path d="M511 99.4H517.6M511 104.9H517.6M511 110.4H517.6"/></g><g fill="#6f6f6f"><circle cx="507" cy="99.4" r="1.2"/><circle cx="507" cy="104.9" r="1.2"/><circle cx="507" cy="110.4" r="1.2"/></g><g fill="none" stroke="#6f6f6f" stroke-width="2.1"><rect x="565.3" y="93.3" width="9.3" height="8.9"/><rect x="579.4" y="93.3" width="9.3" height="8.9"/><rect x="565.3" y="107.7" width="9.3" height="8.9"/><rect x="579.4" y="107.7" width="9.3" height="8.9"/><path d="M575.6 99.1H581.6M583 103.2V109.6M572.2 111H578.4" stroke-width="1.9"/></g><path d="M640.20 92.60L627.60 105.10L640.20 117.60" fill="none" stroke="#747474" stroke-width="2.6" stroke-linecap="round" stroke-linejoin="round"/><path d="M667.60 92.60L680.20 105.10L667.60 117.60" fill="none" stroke="#b6b6b6" stroke-width="2.6" stroke-linecap="round" stroke-linejoin="round"/><path transform="translate(745.40,95.30) scale(1.2960,1.2470) translate(-2.41,-3.41)" d="M13.543 3.41c4.114 2.47 6.545 7.162 5.549 11.131-.024.093-.05.181-.076.272l.002.001c2.062 2.538 1.5 5.258 1.236 4.745-1.072-2.086-3.066-1.568-4.088-1.043a6.803 6.803 0 0 1-.281.158l-.02.012-.002.002c-2.115 1.123-4.957 1.205-7.812-.022a12.568 12.568 0 0 1-5.64-4.838c.649.48 1.35.902 2.097 1.252 3.019 1.414 6.051 1.311 8.197-.002C9.651 12.73 7.101 9.67 5.146 7.191a10.628 10.628 0 0 1-1.005-1.384c2.34 2.142 6.038 4.83 7.365 5.576C8.69 8.408 6.208 4.743 6.324 4.86c4.436 4.47 8.528 6.996 8.528 6.996.154.085.27.154.36.213.085-.215.16-.437.224-.668.708-2.588-.09-5.548-1.893-7.992z" fill="#ef7b4d"/><path transform="translate(1001.70,95.30) scale(1.2960,1.2470) translate(-2.41,-3.41)" d="M13.543 3.41c4.114 2.47 6.545 7.162 5.549 11.131-.024.093-.05.181-.076.272l.002.001c2.062 2.538 1.5 5.258 1.236 4.745-1.072-2.086-3.066-1.568-4.088-1.043a6.803 6.803 0 0 1-.281.158l-.02.012-.002.002c-2.115 1.123-4.957 1.205-7.812-.022a12.568 12.568 0 0 1-5.64-4.838c.649.48 1.35.902 2.097 1.252 3.019 1.414 6.051 1.311 8.197-.002C9.651 12.73 7.101 9.67 5.146 7.191a10.628 10.628 0 0 1-1.005-1.384c2.34 2.142 6.038 4.83 7.365 5.576C8.69 8.408 6.208 4.743 6.324 4.86c4.436 4.47 8.528 6.996 8.528 6.996.154.085.27.154.36.213.085-.215.16-.437.224-.668.708-2.588-.09-5.548-1.893-7.992z" fill="#ef7b4d"/><path transform="translate(1265.60,95.30) scale(1.2960,1.2470) translate(-2.41,-3.41)" d="M13.543 3.41c4.114 2.47 6.545 7.162 5.549 11.131-.024.093-.05.181-.076.272l.002.001c2.062 2.538 1.5 5.258 1.236 4.745-1.072-2.086-3.066-1.568-4.088-1.043a6.803 6.803 0 0 1-.281.158l-.02.012-.002.002c-2.115 1.123-4.957 1.205-7.812-.022a12.568 12.568 0 0 1-5.64-4.838c.649.48 1.35.902 2.097 1.252 3.019 1.414 6.051 1.311 8.197-.002C9.651 12.73 7.101 9.67 5.146 7.191a10.628 10.628 0 0 1-1.005-1.384c2.34 2.142 6.038 4.83 7.365 5.576C8.69 8.408 6.208 4.743 6.324 4.86c4.436 4.47 8.528 6.996 8.528 6.996.154.085.27.154.36.213.085-.215.16-.437.224-.668.708-2.588-.09-5.548-1.893-7.992z" fill="#ef7b4d"/><g fill="none" stroke="#6f6f6f" stroke-width="2.1" stroke-linecap="round" stroke-linejoin="round"><path d="M2866 99H2883.4M2877.4 93L2883.6 99L2877.4 105"/><path d="M2878.4 111H2861M2867 105L2860.8 111L2867 117"/></g><g stroke="#6f6f6f" stroke-width="2" stroke-linecap="butt"><path d="M2906 93.2H2931.6M2906 99.1H2941.8M2906 105H2931.6M2906 110.9H2941.8M2906 116.8H2941.8"/></g><g fill="none" stroke="#6f6f6f" stroke-width="2.2" stroke-linecap="round"><rect x="2981.4" y="93.7" width="23.2" height="22.6" rx="4"/><path d="M2988.6 93.7V116.3"/><path d="M2992.6 105H3000.4M2996.5 101.1V108.9" stroke-width="1.9"/></g><g transform="translate(562.80,147.60) scale(0.8737,0.8581)"><rect x="0" y="0" width="29.3" height="30.3" rx="6.4" fill="#167bfd"/><rect x="2.5" y="2.5" width="24.3" height="25.3" rx="4.2" fill="#1f80fe" stroke="#a3cbff" stroke-width="1.4"/><g stroke="#fff" stroke-width="2.3" stroke-linecap="butt" fill="none"><path d="M10.6 17L16.9 6.900"/><path d="M12.500 6.900L21.900 22.300"/><path d="M5.600 18.100H24"/><path d="M7.500 22.300L8.700 20.200"/></g></g><path d="M700.8 151.2L706.0 160.6L700.8 170" fill="none" stroke="#767676" stroke-width="2" stroke-linecap="round" stroke-linejoin="round"/><g transform="translate(725.40,149.80) scale(0.8493,0.8403)"><path d="M0 3.6A3.6 3.6 0 0 1 3.6 0H9.6c1.2 0 1.9.35 2.7 1.05l.9.8c.75.65 1.4.85 2.5.85H25.6a3.6 3.6 0 0 1 3.6 3.6V20.2a3.6 3.6 0 0 1-3.6 3.6H3.6A3.6 3.6 0 0 1 0 20.2Z" fill="#858a8f"/><rect x="-0.5" y="7.88" width="30.2" height="1.35" fill="#fff"/></g><path d="M864.0 151.2L869.2 160.6L864.0 170" fill="none" stroke="#767676" stroke-width="2" stroke-linecap="round" stroke-linejoin="round"/><g transform="translate(887.00,149.80) scale(0.8493,0.8403)"><path d="M0 3.6A3.6 3.6 0 0 1 3.6 0H9.6c1.2 0 1.9.35 2.7 1.05l.9.8c.75.65 1.4.85 2.5.85H25.6a3.6 3.6 0 0 1 3.6 3.6V20.2a3.6 3.6 0 0 1-3.6 3.6H3.6A3.6 3.6 0 0 1 0 20.2Z" fill="#858a8f"/><rect x="-0.5" y="7.88" width="30.2" height="1.35" fill="#fff"/></g><path d="M997.8 151.2L1003.0 160.6L997.8 170" fill="none" stroke="#767676" stroke-width="2" stroke-linecap="round" stroke-linejoin="round"/><path transform="translate(1021.60,150.40) scale(1.2960,1.2470) translate(-2.41,-3.41)" d="M13.543 3.41c4.114 2.47 6.545 7.162 5.549 11.131-.024.093-.05.181-.076.272l.002.001c2.062 2.538 1.5 5.258 1.236 4.745-1.072-2.086-3.066-1.568-4.088-1.043a6.803 6.803 0 0 1-.281.158l-.02.012-.002.002c-2.115 1.123-4.957 1.205-7.812-.022a12.568 12.568 0 0 1-5.64-4.838c.649.48 1.35.902 2.097 1.252 3.019 1.414 6.051 1.311 8.197-.002C9.651 12.73 7.101 9.67 5.146 7.191a10.628 10.628 0 0 1-1.005-1.384c2.34 2.142 6.038 4.83 7.365 5.576C8.69 8.408 6.208 4.743 6.324 4.86c4.436 4.47 8.528 6.996 8.528 6.996.154.085.27.154.36.213.085-.215.16-.437.224-.668.708-2.588-.09-5.548-1.893-7.992z" fill="#ef7b4d"/><path d="M1211.2 151.2L1216.4 160.6L1211.2 170" fill="none" stroke="#767676" stroke-width="2" stroke-linecap="round" stroke-linejoin="round"/><path d="M2945.90 151.10L2934.50 161.60L2945.90 172.10" fill="none" stroke="#6a6a6a" stroke-width="2.3" stroke-linecap="round" stroke-linejoin="round"/><g transform="translate(2959.40,150.50) scale(1.0392,1.0098)"><path d="M8.55 1.35a1.95 1.95 0 0 1 3.3 0l8.1 14.5a2 2 0 0 1-1.7 3.05H2.15a2 2 0 0 1-1.7-3.05Z" fill="#f5b81f"/><rect x="9.15" y="6" width="2.1" height="7.2" rx="1.05" fill="#fff"/><circle cx="10.2" cy="15.7" r="1.25" fill="#fff"/></g><path d="M2993.60 151.10L3005.00 161.60L2993.60 172.10" fill="none" stroke="#6a6a6a" stroke-width="2.3" stroke-linecap="round" stroke-linejoin="round"/><g transform="translate(54.60,160.90) scale(1.0000,1.0000)"><rect x="0" y="0" width="29.3" height="30.3" rx="6.4" fill="#167bfd"/><rect x="2.5" y="2.5" width="24.3" height="25.3" rx="4.2" fill="#1f80fe" stroke="#a3cbff" stroke-width="1.4"/><g stroke="#fff" stroke-width="2.3" stroke-linecap="butt" fill="none"><path d="M10.6 17L16.9 6.900"/><path d="M12.500 6.900L21.900 22.300"/><path d="M5.600 18.100H24"/><path d="M7.500 22.300L8.700 20.200"/></g></g><path d="M29.60 173.30L36.20 180.50L42.80 173.30" fill="none" stroke="#6e6e6e" stroke-width="2.6" stroke-linecap="round" stroke-linejoin="round"/><g transform="translate(83.00,208.30) scale(1.0000,1.0000)"><path d="M0 3.6A3.6 3.6 0 0 1 3.6 0H9.6c1.2 0 1.9.35 2.7 1.05l.9.8c.75.65 1.4.85 2.5.85H25.6a3.6 3.6 0 0 1 3.6 3.6V20.2a3.6 3.6 0 0 1-3.6 3.6H3.6A3.6 3.6 0 0 1 0 20.2Z" fill="#858a8f"/><rect x="-0.5" y="7.88" width="30.2" height="1.35" fill="#f5f5f5"/></g><path d="M57.40 217.30L64.00 224.50L70.60 217.30" fill="none" stroke="#6e6e6e" stroke-width="2.6" stroke-linecap="round" stroke-linejoin="round"/><path transform="translate(110.90,250.70) scale(1.5651,1.5254) translate(-2.41,-3.41)" d="M13.543 3.41c4.114 2.47 6.545 7.162 5.549 11.131-.024.093-.05.181-.076.272l.002.001c2.062 2.538 1.5 5.258 1.236 4.745-1.072-2.086-3.066-1.568-4.088-1.043a6.803 6.803 0 0 1-.281.158l-.02.012-.002.002c-2.115 1.123-4.957 1.205-7.812-.022a12.568 12.568 0 0 1-5.64-4.838c.649.48 1.35.902 2.097 1.252 3.019 1.414 6.051 1.311 8.197-.002C9.651 12.73 7.101 9.67 5.146 7.191a10.628 10.628 0 0 1-1.005-1.384c2.34 2.142 6.038 4.83 7.365 5.576C8.69 8.408 6.208 4.743 6.324 4.86c4.436 4.47 8.528 6.996 8.528 6.996.154.085.27.154.36.213.085-.215.16-.437.224-.668.708-2.588-.09-5.548-1.893-7.992z" fill="url(#sw)"/><g transform="translate(111.00,296.30) scale(1.0000,1.0000)"><path d="M0 3.6A3.6 3.6 0 0 1 3.6 0H9.6c1.2 0 1.9.35 2.7 1.05l.9.8c.75.65 1.4.85 2.5.85H25.6a3.6 3.6 0 0 1 3.6 3.6V20.2a3.6 3.6 0 0 1-3.6 3.6H3.6A3.6 3.6 0 0 1 0 20.2Z" fill="#858a8f"/><rect x="-0.5" y="7.88" width="30.2" height="1.35" fill="#f5f5f5"/></g><path d="M85.40 305.30L92.00 312.50L98.60 305.30" fill="none" stroke="#6e6e6e" stroke-width="2.6" stroke-linecap="round" stroke-linejoin="round"/><path transform="translate(138.90,338.70) scale(1.5651,1.5254) translate(-2.41,-3.41)" d="M13.543 3.41c4.114 2.47 6.545 7.162 5.549 11.131-.024.093-.05.181-.076.272l.002.001c2.062 2.538 1.5 5.258 1.236 4.745-1.072-2.086-3.066-1.568-4.088-1.043a6.803 6.803 0 0 1-.281.158l-.02.012-.002.002c-2.115 1.123-4.957 1.205-7.812-.022a12.568 12.568 0 0 1-5.64-4.838c.649.48 1.35.902 2.097 1.252 3.019 1.414 6.051 1.311 8.197-.002C9.651 12.73 7.101 9.67 5.146 7.191a10.628 10.628 0 0 1-1.005-1.384c2.34 2.142 6.038 4.83 7.365 5.576C8.69 8.408 6.208 4.743 6.324 4.86c4.436 4.47 8.528 6.996 8.528 6.996.154.085.27.154.36.213.085-.215.16-.437.224-.668.708-2.588-.09-5.548-1.893-7.992z" fill="url(#sw)"/><g transform="translate(111.00,384.30) scale(1.0000,1.0000)"><path d="M0 3.6A3.6 3.6 0 0 1 3.6 0H9.6c1.2 0 1.9.35 2.7 1.05l.9.8c.75.65 1.4.85 2.5.85H25.6a3.6 3.6 0 0 1 3.6 3.6V20.2a3.6 3.6 0 0 1-3.6 3.6H3.6A3.6 3.6 0 0 1 0 20.2Z" fill="#858a8f"/><rect x="-0.5" y="7.88" width="30.2" height="1.35" fill="#f5f5f5"/></g><path d="M85.40 393.30L92.00 400.50L98.60 393.30" fill="none" stroke="#6e6e6e" stroke-width="2.6" stroke-linecap="round" stroke-linejoin="round"/><path transform="translate(138.90,426.70) scale(1.5651,1.5254) translate(-2.41,-3.41)" d="M13.543 3.41c4.114 2.47 6.545 7.162 5.549 11.131-.024.093-.05.181-.076.272l.002.001c2.062 2.538 1.5 5.258 1.236 4.745-1.072-2.086-3.066-1.568-4.088-1.043a6.803 6.803 0 0 1-.281.158l-.02.012-.002.002c-2.115 1.123-4.957 1.205-7.812-.022a12.568 12.568 0 0 1-5.64-4.838c.649.48 1.35.902 2.097 1.252 3.019 1.414 6.051 1.311 8.197-.002C9.651 12.73 7.101 9.67 5.146 7.191a10.628 10.628 0 0 1-1.005-1.384c2.34 2.142 6.038 4.83 7.365 5.576C8.69 8.408 6.208 4.743 6.324 4.86c4.436 4.47 8.528 6.996 8.528 6.996.154.085.27.154.36.213.085-.215.16-.437.224-.668.708-2.588-.09-5.548-1.893-7.992z" fill="url(#sw)"/><path transform="translate(138.90,470.70) scale(1.5651,1.5254) translate(-2.41,-3.41)" d="M13.543 3.41c4.114 2.47 6.545 7.162 5.549 11.131-.024.093-.05.181-.076.272l.002.001c2.062 2.538 1.5 5.258 1.236 4.745-1.072-2.086-3.066-1.568-4.088-1.043a6.803 6.803 0 0 1-.281.158l-.02.012-.002.002c-2.115 1.123-4.957 1.205-7.812-.022a12.568 12.568 0 0 1-5.64-4.838c.649.48 1.35.902 2.097 1.252 3.019 1.414 6.051 1.311 8.197-.002C9.651 12.73 7.101 9.67 5.146 7.191a10.628 10.628 0 0 1-1.005-1.384c2.34 2.142 6.038 4.83 7.365 5.576C8.69 8.408 6.208 4.743 6.324 4.86c4.436 4.47 8.528 6.996 8.528 6.996.154.085.27.154.36.213.085-.215.16-.437.224-.668.708-2.588-.09-5.548-1.893-7.992z" fill="url(#sw)"/><g transform="translate(111.00,516.30) scale(1.0000,1.0000)"><path d="M0 3.6A3.6 3.6 0 0 1 3.6 0H9.6c1.2 0 1.9.35 2.7 1.05l.9.8c.75.65 1.4.85 2.5.85H25.6a3.6 3.6 0 0 1 3.6 3.6V20.2a3.6 3.6 0 0 1-3.6 3.6H3.6A3.6 3.6 0 0 1 0 20.2Z" fill="#858a8f"/><rect x="-0.5" y="7.88" width="30.2" height="1.35" fill="#f5f5f5"/></g><path d="M85.40 525.30L92.00 532.50L98.60 525.30" fill="none" stroke="#6e6e6e" stroke-width="2.6" stroke-linecap="round" stroke-linejoin="round"/><path transform="translate(138.90,558.70) scale(1.5651,1.5254) translate(-2.41,-3.41)" d="M13.543 3.41c4.114 2.47 6.545 7.162 5.549 11.131-.024.093-.05.181-.076.272l.002.001c2.062 2.538 1.5 5.258 1.236 4.745-1.072-2.086-3.066-1.568-4.088-1.043a6.803 6.803 0 0 1-.281.158l-.02.012-.002.002c-2.115 1.123-4.957 1.205-7.812-.022a12.568 12.568 0 0 1-5.64-4.838c.649.48 1.35.902 2.097 1.252 3.019 1.414 6.051 1.311 8.197-.002C9.651 12.73 7.101 9.67 5.146 7.191a10.628 10.628 0 0 1-1.005-1.384c2.34 2.142 6.038 4.83 7.365 5.576C8.69 8.408 6.208 4.743 6.324 4.86c4.436 4.47 8.528 6.996 8.528 6.996.154.085.27.154.36.213.085-.215.16-.437.224-.668.708-2.588-.09-5.548-1.893-7.992z" fill="url(#sw)"/><path transform="translate(138.90,602.70) scale(1.5651,1.5254) translate(-2.41,-3.41)" d="M13.543 3.41c4.114 2.47 6.545 7.162 5.549 11.131-.024.093-.05.181-.076.272l.002.001c2.062 2.538 1.5 5.258 1.236 4.745-1.072-2.086-3.066-1.568-4.088-1.043a6.803 6.803 0 0 1-.281.158l-.02.012-.002.002c-2.115 1.123-4.957 1.205-7.812-.022a12.568 12.568 0 0 1-5.64-4.838c.649.48 1.35.902 2.097 1.252 3.019 1.414 6.051 1.311 8.197-.002C9.651 12.73 7.101 9.67 5.146 7.191a10.628 10.628 0 0 1-1.005-1.384c2.34 2.142 6.038 4.83 7.365 5.576C8.69 8.408 6.208 4.743 6.324 4.86c4.436 4.47 8.528 6.996 8.528 6.996.154.085.27.154.36.213.085-.215.16-.437.224-.668.708-2.588-.09-5.548-1.893-7.992z" fill="url(#sw)"/><path transform="translate(138.90,646.70) scale(1.5651,1.5254) translate(-2.41,-3.41)" d="M13.543 3.41c4.114 2.47 6.545 7.162 5.549 11.131-.024.093-.05.181-.076.272l.002.001c2.062 2.538 1.5 5.258 1.236 4.745-1.072-2.086-3.066-1.568-4.088-1.043a6.803 6.803 0 0 1-.281.158l-.02.012-.002.002c-2.115 1.123-4.957 1.205-7.812-.022a12.568 12.568 0 0 1-5.64-4.838c.649.48 1.35.902 2.097 1.252 3.019 1.414 6.051 1.311 8.197-.002C9.651 12.73 7.101 9.67 5.146 7.191a10.628 10.628 0 0 1-1.005-1.384c2.34 2.142 6.038 4.83 7.365 5.576C8.69 8.408 6.208 4.743 6.324 4.86c4.436 4.47 8.528 6.996 8.528 6.996.154.085.27.154.36.213.085-.215.16-.437.224-.668.708-2.588-.09-5.548-1.893-7.992z" fill="url(#sw)"/><path transform="translate(138.90,690.70) scale(1.5651,1.5254) translate(-2.41,-3.41)" d="M13.543 3.41c4.114 2.47 6.545 7.162 5.549 11.131-.024.093-.05.181-.076.272l.002.001c2.062 2.538 1.5 5.258 1.236 4.745-1.072-2.086-3.066-1.568-4.088-1.043a6.803 6.803 0 0 1-.281.158l-.02.012-.002.002c-2.115 1.123-4.957 1.205-7.812-.022a12.568 12.568 0 0 1-5.64-4.838c.649.48 1.35.902 2.097 1.252 3.019 1.414 6.051 1.311 8.197-.002C9.651 12.73 7.101 9.67 5.146 7.191a10.628 10.628 0 0 1-1.005-1.384c2.34 2.142 6.038 4.83 7.365 5.576C8.69 8.408 6.208 4.743 6.324 4.86c4.436 4.47 8.528 6.996 8.528 6.996.154.085.27.154.36.213.085-.215.16-.437.224-.668.708-2.588-.09-5.548-1.893-7.992z" fill="url(#sw)"/><path transform="translate(138.90,734.70) scale(1.5651,1.5254) translate(-2.41,-3.41)" d="M13.543 3.41c4.114 2.47 6.545 7.162 5.549 11.131-.024.093-.05.181-.076.272l.002.001c2.062 2.538 1.5 5.258 1.236 4.745-1.072-2.086-3.066-1.568-4.088-1.043a6.803 6.803 0 0 1-.281.158l-.02.012-.002.002c-2.115 1.123-4.957 1.205-7.812-.022a12.568 12.568 0 0 1-5.64-4.838c.649.48 1.35.902 2.097 1.252 3.019 1.414 6.051 1.311 8.197-.002C9.651 12.73 7.101 9.67 5.146 7.191a10.628 10.628 0 0 1-1.005-1.384c2.34 2.142 6.038 4.83 7.365 5.576C8.69 8.408 6.208 4.743 6.324 4.86c4.436 4.47 8.528 6.996 8.528 6.996.154.085.27.154.36.213.085-.215.16-.437.224-.668.708-2.588-.09-5.548-1.893-7.992z" fill="#fff"/><g transform="translate(111.00,780.30) scale(1.0000,1.0000)"><path d="M0 3.6A3.6 3.6 0 0 1 3.6 0H9.6c1.2 0 1.9.35 2.7 1.05l.9.8c.75.65 1.4.85 2.5.85H25.6a3.6 3.6 0 0 1 3.6 3.6V20.2a3.6 3.6 0 0 1-3.6 3.6H3.6A3.6 3.6 0 0 1 0 20.2Z" fill="#858a8f"/><rect x="-0.5" y="7.88" width="30.2" height="1.35" fill="#f5f5f5"/></g><path d="M85.40 789.30L92.00 796.50L98.60 789.30" fill="none" stroke="#6e6e6e" stroke-width="2.6" stroke-linecap="round" stroke-linejoin="round"/><path transform="translate(138.90,822.70) scale(1.5651,1.5254) translate(-2.41,-3.41)" d="M13.543 3.41c4.114 2.47 6.545 7.162 5.549 11.131-.024.093-.05.181-.076.272l.002.001c2.062 2.538 1.5 5.258 1.236 4.745-1.072-2.086-3.066-1.568-4.088-1.043a6.803 6.803 0 0 1-.281.158l-.02.012-.002.002c-2.115 1.123-4.957 1.205-7.812-.022a12.568 12.568 0 0 1-5.64-4.838c.649.48 1.35.902 2.097 1.252 3.019 1.414 6.051 1.311 8.197-.002C9.651 12.73 7.101 9.67 5.146 7.191a10.628 10.628 0 0 1-1.005-1.384c2.34 2.142 6.038 4.83 7.365 5.576C8.69 8.408 6.208 4.743 6.324 4.86c4.436 4.47 8.528 6.996 8.528 6.996.154.085.27.154.36.213.085-.215.16-.437.224-.668.708-2.588-.09-5.548-1.893-7.992z" fill="url(#sw)"/><g transform="translate(0,0.00)"><rect x="-11.35" y="-8.3" width="22.7" height="16.6" rx="3.2" transform="translate(123.3,877.3) rotate(-9.2)" fill="none" stroke="#1eacf8" stroke-width="2.4"/><rect x="115" y="871.2" width="28.8" height="23.4" rx="5" fill="#f5f5f5"/><rect x="117.75" y="873.95" width="23.2" height="17.9" rx="3" fill="#fff" stroke="#1eacf8" stroke-width="2.3"/><circle cx="126" cy="879.8" r="2.7" fill="#1eacf8"/><path d="M118.6 887.4L122.2 884.7a0.8 0.8 0 0 1 1 0L126 886.9L132.4 882.4a1.2 1.2 0 0 1 1.400 0L140.3 887.4V890.2a1.6 1.6 0 0 1-1.6 1.6H120.2a1.6 1.6 0 0 1-1.6-1.6Z" fill="#1eacf8"/></g><g transform="translate(111.00,912.30) scale(1.0000,1.0000)"><path d="M0 3.6A3.6 3.6 0 0 1 3.6 0H9.6c1.2 0 1.9.35 2.7 1.05l.9.8c.75.65 1.4.85 2.5.85H25.6a3.6 3.6 0 0 1 3.6 3.6V20.2a3.6 3.6 0 0 1-3.6 3.6H3.6A3.6 3.6 0 0 1 0 20.2Z" fill="#858a8f"/><rect x="-0.5" y="7.88" width="30.2" height="1.35" fill="#f5f5f5"/></g><path d="M89.60 917.50L96.80 924.10L89.60 930.70" fill="none" stroke="#6e6e6e" stroke-width="2.6" stroke-linecap="round" stroke-linejoin="round"/><path d="M34.60 1025.40L41.80 1032.00L34.60 1038.60" fill="none" stroke="#6e6e6e" stroke-width="2.6" stroke-linecap="round" stroke-linejoin="round"/><g transform="translate(56.60,1018.20) scale(1.0000,1.0000)"><path d="M12.3 0.9a2.6 2.6 0 0 1 2.4 0L25 6.3a2.4 2.4 0 0 1 1.3 2.1V20a2.4 2.4 0 0 1-1.3 2.1L14.7 27.6a2.6 2.6 0 0 1-2.4 0L2 22.100a2.4 2.4 0 0 1-1.3-2.1V8.4A2.4 2.400 0 0 1 2 6.3Z" fill="#b17b3a"/><path d="M13.5 14.1V28" stroke="#f5f5f5" stroke-width="1.4"/><path d="M0.6 7.3L13.5 14.1L26.4 7.3" stroke="#f5f5f5" stroke-width="1.4" fill="none"/><path d="M6.6 3.6L19.4 10.4" stroke="#f5f5f5" stroke-width="1.4" fill="none"/><path d="M11.2 1.2L24 7.9" stroke="#f5f5f5" stroke-width="1.4" fill="none"/></g><path d="M34.60 1069.40L41.80 1076.00L34.60 1082.60" fill="none" stroke="#6e6e6e" stroke-width="2.6" stroke-linecap="round" stroke-linejoin="round"/><g transform="translate(56.60,1062.20) scale(1.0000,1.0000)"><path d="M12.3 0.9a2.6 2.6 0 0 1 2.4 0L25 6.3a2.4 2.4 0 0 1 1.3 2.1V20a2.4 2.4 0 0 1-1.3 2.1L14.7 27.6a2.6 2.6 0 0 1-2.4 0L2 22.100a2.4 2.4 0 0 1-1.3-2.1V8.4A2.4 2.400 0 0 1 2 6.3Z" fill="#b17b3a"/><path d="M13.5 14.1V28" stroke="#f5f5f5" stroke-width="1.4"/><path d="M0.6 7.3L13.5 14.1L26.4 7.3" stroke="#f5f5f5" stroke-width="1.4" fill="none"/><path d="M6.6 3.6L19.4 10.4" stroke="#f5f5f5" stroke-width="1.4" fill="none"/><path d="M11.2 1.2L24 7.9" stroke="#f5f5f5" stroke-width="1.4" fill="none"/></g><path d="M34.60 1113.40L41.80 1120.00L34.60 1126.60" fill="none" stroke="#6e6e6e" stroke-width="2.6" stroke-linecap="round" stroke-linejoin="round"/><g transform="translate(56.60,1106.20) scale(1.0000,1.0000)"><path d="M12.3 0.9a2.6 2.6 0 0 1 2.4 0L25 6.3a2.4 2.4 0 0 1 1.3 2.1V20a2.4 2.4 0 0 1-1.3 2.1L14.7 27.6a2.6 2.6 0 0 1-2.4 0L2 22.100a2.4 2.4 0 0 1-1.3-2.1V8.4A2.4 2.400 0 0 1 2 6.3Z" fill="#b17b3a"/><path d="M13.5 14.1V28" stroke="#f5f5f5" stroke-width="1.4"/><path d="M0.6 7.3L13.5 14.1L26.4 7.3" stroke="#f5f5f5" stroke-width="1.4" fill="none"/><path d="M6.6 3.6L19.4 10.4" stroke="#f5f5f5" stroke-width="1.4" fill="none"/><path d="M11.2 1.2L24 7.9" stroke="#f5f5f5" stroke-width="1.4" fill="none"/></g><path d="M34.60 1157.40L41.80 1164.00L34.60 1170.60" fill="none" stroke="#6e6e6e" stroke-width="2.6" stroke-linecap="round" stroke-linejoin="round"/><g transform="translate(56.60,1150.20) scale(1.0000,1.0000)"><path d="M12.3 0.9a2.6 2.6 0 0 1 2.4 0L25 6.3a2.4 2.4 0 0 1 1.3 2.1V20a2.4 2.4 0 0 1-1.3 2.1L14.7 27.6a2.6 2.6 0 0 1-2.4 0L2 22.100a2.4 2.4 0 0 1-1.3-2.1V8.4A2.4 2.400 0 0 1 2 6.3Z" fill="#b17b3a"/><path d="M13.5 14.1V28" stroke="#f5f5f5" stroke-width="1.4"/><path d="M0.6 7.3L13.5 14.1L26.4 7.3" stroke="#f5f5f5" stroke-width="1.4" fill="none"/><path d="M6.6 3.6L19.4 10.4" stroke="#f5f5f5" stroke-width="1.4" fill="none"/><path d="M11.2 1.2L24 7.9" stroke="#f5f5f5" stroke-width="1.4" fill="none"/></g><path d="M25 1860.2H44.4M34.7 1850.5V1869.9" stroke="#4a4a4a" stroke-width="2.3" stroke-linecap="round"/><rect x="66.1" y="1848.5" width="49.2" height="22.8" rx="11.4" fill="none" stroke="#6b6b6b" stroke-width="2.1"/><path d="M75.4 1855.4H87.4M77.6 1859.9H85.2M79.6 1864.3H83.2" stroke="#6b6b6b" stroke-width="1.9" stroke-linecap="round"/><path d="M97.8 1857.8L102.2 1862.2L106.6 1857.8" fill="none" stroke="#5a5a5a" stroke-width="2.3" stroke-linecap="round" stroke-linejoin="round"/><circle cx="474.7" cy="1859.9" r="11.8" fill="none" stroke="#6b6b6b" stroke-width="2"/><path d="M474.9 1852.6V1860.1H469.2" fill="none" stroke="#6b6b6b" stroke-width="1.9" stroke-linecap="round" stroke-linejoin="round"/><rect x="497" y="1848.4" width="24" height="23" rx="2" fill="none" stroke="#6b6b6b" stroke-width="2"/><path d="M500.6 1860H509M504.8 1855.8V1864.2M511 1860H518" stroke="#6b6b6b" stroke-width="2" stroke-linecap="butt"/><path d="M572.6 1852H591a3.400 3.400 0 0 1 2.900 1.600L598 1859.400a2.600 2.600 0 0 1 0 3L593.900 1868.200a3.400 3.400 0 0 1-2.900 1.600H572.600a3.400 3.400 0 0 1-3.400-3.400V1855.400a3.400 3.400 0 0 1 3.400-3.400Z" fill="#3478f6"/><g fill="none" stroke="#6f6f6f" stroke-width="2"><rect x="638" y="1849.2" width="3.9" height="23.5" rx="1.6"/><rect x="650.1" y="1849.2" width="3.9" height="23.5" rx="1.6"/></g><g fill="none" stroke="#c2c2c2" stroke-width="2" stroke-linejoin="round" stroke-linecap="round"><path d="M694.4 1864.4L706 1852.8L717.6 1864.4"/><path d="M711.4 1864.6H718V1858"/><rect x="697.6" y="1868.6" width="16.8" height="4.2"/></g><g fill="none" stroke="#c2c2c2" stroke-width="2" stroke-linejoin="round" stroke-linecap="round"><path d="M765.7 1849.6V1864.4M759.4 1858.4L765.7 1864.8L772 1858.4"/><rect x="757.4" y="1868.6" width="16.6" height="4.2"/></g><g fill="none" stroke="#c2c2c2" stroke-width="2" stroke-linejoin="round" stroke-linecap="round"><path d="M825.8 1864.6V1849.8M819.5 1856L825.8 1849.6L832.1 1856"/><rect x="817.5" y="1868.6" width="16.6" height="4.2"/></g><g fill="none" stroke="#6f6f6f" stroke-width="2" stroke-linejoin="round" stroke-linecap="round"><path d="M886 1859.6L898.4 1854.600V1868.800L886 1874.400Z"/><path d="M882 1871.6V1856.800L893.800 1851.400"/><path d="M877.6 1869.2V1854.200L889.400 1848.800"/></g><g fill="none" stroke="#6f6f6f" stroke-width="2"><circle cx="939.6" cy="1852.6" r="3.8"/><circle cx="939.6" cy="1869.4" r="3.8"/><circle cx="956.4" cy="1861" r="3.8"/><path d="M943 1854.4L953 1859.2M943 1867.6L953 1862.8"/></g><g fill="none" stroke="#6f6f6f" stroke-width="2"><rect x="997.8" y="1849.8" width="20.6" height="9.6" rx="4.8"/><rect x="997.8" y="1862.8" width="20.6" height="9.6" rx="4.8"/></g><circle cx="1003.2" cy="1854.6" r="2.7" fill="#6f6f6f"/><circle cx="1013" cy="1867.6" r="2.7" fill="#6f6f6f"/><path d="M1080.4 1848.8L1056.8 1858.9H1069.6V1872.3L1080.400 1848.8Z" fill="none" stroke="#6f6f6f" stroke-width="2" stroke-linejoin="round"/><g transform="translate(1118.00,1848.80) scale(0.9872,0.9872)"><rect x="0" y="0" width="23.5" height="23.5" rx="4.6" fill="#7d7d7d"/><g stroke="#fff" stroke-width="1.8" stroke-linecap="butt" fill="none"><path d="M8.6 13.2L13.4 5.4"/><path d="M10.1 5.400L17.300 17.200"/><path d="M4.400 14H19.200"/><path d="M6.200 17.200L7.100 15.600"/></g></g><rect x="2974.2" y="1849.2" width="23.8" height="23.6" rx="4.6" fill="none" stroke="#757575" stroke-width="2.2"/><rect x="2978" y="1864.2" width="16.2" height="5.4" rx="2" fill="#757575"/></svg></div></body></html>
